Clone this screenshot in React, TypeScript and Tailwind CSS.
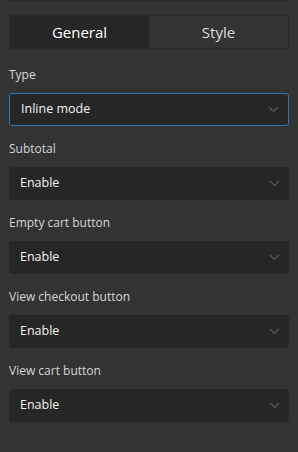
import React, { useState } from "react";

const fields = [
  { label: "Type", value: "Inline mode", active: true },
  { label: "Subtotal", value: "Enable" },
  { label: "Empty cart button", value: "Enable" },
  { label: "View checkout button", value: "Enable" },
  { label: "View cart button", value: "Enable" },
];

const Chevron = () => (
  <svg width="11" height="7" viewBox="0 0 11 7" fill="none">
    <path d="M1 1l4.5 4.5L10 1" stroke="#595959" strokeWidth="1.2" />
  </svg>
);

export default function App() {
  const [tab, setTab] = useState("general");

  return (
    <div
      className="w-[298px] h-[452px] bg-[#333333] px-[9px] text-[#e6e6e6]"
      style={{ fontFamily: '"Open Sans", "Noto Sans", sans-serif' }}
    >
      <div className="h-px bg-[#282828]" />

      {/* Tabs */}
      <div className="mt-[14px] flex h-[34px] border border-[#2a2a2a]">
        <button
          onClick={() => setTab("general")}
          className={`flex-1 text-[15px] ${tab === "general" ? "bg-[#262626] text-white" : "bg-[#333333] text-[#dcdcdc]"}`}
        >
          General
        </button>
        <button
          onClick={() => setTab("style")}
          className={`flex-1 text-[15px] ${tab === "style" ? "bg-[#262626] text-white" : "bg-[#333333] text-[#dcdcdc]"}`}
        >
          Style
        </button>
      </div>

      {/* Fields */}
      {fields.map((f, i) => (
        <div key={f.label} className={i === 0 ? "mt-[18px]" : "mt-[15px]"}>
          <div className="text-[12px] leading-4 text-[#d6d6d6]">{f.label}</div>
          <div
            className={`mt-[10px] flex h-[33px] items-center justify-between rounded-[3px] bg-[#262626] pl-[11px] pr-[9px] ${
              f.active ? "border border-[#2f74b5]" : ""
            }`}
          >
            <span className="text-[12.5px] text-[#f2f2f2]">{f.value}</span>
            <Chevron />
          </div>
        </div>
      ))}
    </div>
  );
}
